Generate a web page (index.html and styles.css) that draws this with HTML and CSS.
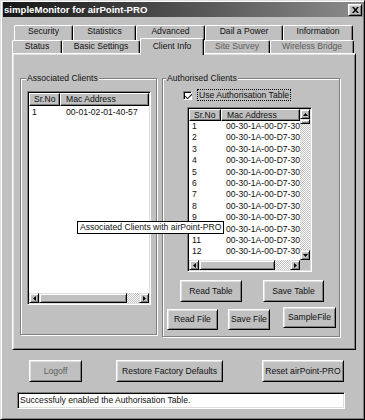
FILE: index.html
```html
<!DOCTYPE html>
<html>
<head>
<meta charset="utf-8">
<title>simpleMonitor for airPoint-PRO</title>
<link rel="stylesheet" href="styles.css">
</head>
<body>
<div class="window">
  <div class="titlebar">
    <span class="title">simpleMonitor for airPoint-PRO</span>
    <div class="close"><svg width="7" height="6" viewBox="0 0 7 6"><path d="M0 0h2l1.5 2L5 0h2L4.5 3 7 6H5L3.5 4 2 6H0l2.5-3z" fill="#000"/></svg></div>
  </div>

  <div class="tabs">
    <div class="tabrow back">
      <div class="tab t-sec">Security</div>
      <div class="tab t-stat">Statistics</div>
      <div class="tab t-adv">Advanced</div>
      <div class="tab t-dail">Dail a Power</div>
      <div class="tab t-info">Information</div>
    </div>
    <div class="tabrow front">
      <div class="tab t-status">Status</div>
      <div class="tab t-basic">Basic Settings</div>
      <div class="tab active t-client">Client Info</div>
      <div class="tab disabled t-site">Site Survey</div>
      <div class="tab disabled t-wb">Wireless Bridge</div>
    </div>
  </div>

  <div class="panel">
    <div class="group g1">
      <span class="glabel">Associated Clients</span>
      <div class="list l1">
        <div class="lv-header">
          <div class="hcell hc1">Sr.No</div>
          <div class="hcell hc2">Mac Address</div>
        </div>
        <div class="rows">
          <div class="row"><span class="c1">1</span><span class="c2">00-01-02-01-40-57</span></div>
        </div>
        <div class="hscroll">
          <div class="sbtn"><svg width="3" height="5" viewBox="0 0 3 5"><path d="M3 0v5L0 2.5z" fill="#000"/></svg></div>
          <div class="thumb th1"></div>
          <div class="track"></div>
          <div class="sbtn"><svg width="3" height="5" viewBox="0 0 3 5"><path d="M0 0v5l3-2.5z" fill="#000"/></svg></div>
        </div>
      </div>
    </div>

    <div class="group g2">
      <span class="glabel">Authorised Clients</span>
      <div class="checkrow">
        <div class="checkbox"><svg width="7" height="6" viewBox="0 0 7 6"><path d="M0 2.5l2.5 2.5L7 0.5V2L2.5 6.2 0 3.8z" fill="#000"/></svg></div>
        <span class="focus">Use Authorisation Table</span>
      </div>
      <div class="list l2">
        <div class="lv-main">
          <div class="lv-header">
            <div class="hcell hc1">Sr.No</div>
            <div class="hcell hc2">Mac Address</div>
          </div>
          <div class="rows">
            <div class="row"><span class="c1">1</span><span class="c2">00-30-1A-00-D7-30</span></div>
            <div class="row"><span class="c1">2</span><span class="c2">00-30-1A-00-D7-30</span></div>
            <div class="row"><span class="c1">3</span><span class="c2">00-30-1A-00-D7-30</span></div>
            <div class="row"><span class="c1">4</span><span class="c2">00-30-1A-00-D7-30</span></div>
            <div class="row"><span class="c1">5</span><span class="c2">00-30-1A-00-D7-30</span></div>
            <div class="row"><span class="c1">6</span><span class="c2">00-30-1A-00-D7-30</span></div>
            <div class="row"><span class="c1">7</span><span class="c2">00-30-1A-00-D7-30</span></div>
            <div class="row"><span class="c1">8</span><span class="c2">00-30-1A-00-D7-30</span></div>
            <div class="row"><span class="c1">9</span><span class="c2">00-30-1A-00-D7-30</span></div>
            <div class="row"><span class="c1">10</span><span class="c2">00-30-1A-00-D7-30</span></div>
            <div class="row"><span class="c1">11</span><span class="c2">00-30-1A-00-D7-30</span></div>
            <div class="row"><span class="c1">12</span><span class="c2">00-30-1A-00-D7-30</span></div>
          </div>
        </div>
        <div class="vscroll">
          <div class="sbtn"><svg width="5" height="3" viewBox="0 0 5 3"><path d="M0 3h5L2.5 0z" fill="#000"/></svg></div>
          <div class="thumb thv"></div>
          <div class="track"></div>
          <div class="sbtn"><svg width="5" height="3" viewBox="0 0 5 3"><path d="M0 0h5L2.5 3z" fill="#000"/></svg></div>
        </div>
        <div class="hscroll">
          <div class="sbtn"><svg width="3" height="5" viewBox="0 0 3 5"><path d="M3 0v5L0 2.5z" fill="#000"/></svg></div>
          <div class="thumb th2"></div>
          <div class="track"></div>
          <div class="sbtn"><svg width="3" height="5" viewBox="0 0 3 5"><path d="M0 0v5l3-2.5z" fill="#000"/></svg></div>
        </div>
        <div class="corner"></div>
      </div>
      <div class="brow1">
        <div class="btn b-readtable">Read Table</div>
        <div class="btn b-savetable">Save Table</div>
      </div>
      <div class="brow2">
        <div class="btn b-readfile">Read File</div>
        <div class="btn b-savefile">Save File</div>
        <div class="btn b-sample">SampleFile</div>
      </div>
    </div>
  </div>

  <div class="bottom">
    <div class="btn disabled b-logoff">Logoff</div>
    <div class="btn b-restore">Restore Factory Defaults</div>
    <div class="btn b-reset">Reset airPoint-PRO</div>
  </div>

  <div class="status">Successfuly enabled the Authorisation Table.</div>

  <div class="tooltip">Associated Clients with airPoint-PRO</div>
</div>
</body>
</html>
```

FILE: styles.css
```css
* { box-sizing: border-box; }
html, body { margin: 0; padding: 0; }
body {
  background: #c0c0c0;
  font-family: "Liberation Sans", Arial, sans-serif;
  font-size: 8.6px;
  line-height: 11px;
  color: #111;
}

.window {
  position: relative;
  width: 365px;
  height: 420px;
  background: #c0c0c0;
  border: 1px solid;
  border-color: #dfdfdf #000 #000 #dfdfdf;
  box-shadow: inset 1px 1px #fff, inset -1px -1px #808080;
  padding: 1px 1px 1px 2px;
}

/* title bar */
.titlebar {
  display: flex;
  align-items: center;
  justify-content: space-between;
  height: 15px;
  padding: 0 1px;
  background: linear-gradient(90deg, #161616, #8c8c8c);
}
.title {
  color: #fff;
  font-weight: bold;
  font-size: 9.6px;
  white-space: nowrap;
}
.close {
  width: 14px;
  height: 12px;
  background: #c0c0c0;
  border: 1px solid;
  border-color: #fff #000 #000 #fff;
  box-shadow: inset 1px 1px #dfdfdf, inset -1px -1px #808080;
  display: flex;
  align-items: center;
  justify-content: center;
}

/* tabs */
.tabs { margin-top: 8px; }
.tabrow { display: flex; height: 15px; }
.tabrow.back { margin-left: 11px; }
.tabrow.front { margin-left: 9px; margin-top: -2px; align-items: flex-end; }
.tab {
  flex: none;
  background: #c0c0c0;
  border: 1px solid #fff;
  border-right-color: #000;
  border-bottom: 0;
  border-radius: 2px 2px 0 0;
  box-shadow: inset -1px 0 #808080;
  text-align: center;
  white-space: nowrap;
}
.back .tab { height: 15px; }
.front .tab { height: 13px; }
.front .tab.active {
  height: 17px;
  margin-bottom: -2px;
  padding-top: 2px;
  position: relative;
  z-index: 1;
}
.tab.disabled { color: #5c5c5c; }
.t-sec { width: 59px; }
.t-stat { width: 63px; }
.t-adv { width: 69px; }
.t-dail { width: 78px; }
.t-info { width: 70px; }
.t-status { width: 50px; }
.t-basic { width: 78px; }
.t-client { width: 64px; }
.t-site { width: 66px; }
.t-wb { width: 84px; }

/* panel */
.panel {
  margin-left: 9px;
  width: 344px;
  height: 297px;
  border: 1px solid;
  border-color: #fff #000 #000 #fff;
  box-shadow: inset 1px 1px #dfdfdf, inset -1px -1px #808080;
  padding: 24px 0 0 7px;
  display: flex;
  align-items: flex-start;
  gap: 5px;
}

/* group boxes */
.group {
  flex: none;
  border: 1px solid #808080;
  box-shadow: inset 1px 1px #fff, 1px 1px #fff;
}
.g1 { width: 137px; height: 257px; }
.g2 { width: 178px; height: 259px; }
.glabel {
  display: block;
  width: fit-content;
  height: 11px;
  margin-top: -6px;
  padding: 0 1px;
  background: #c0c0c0;
  white-space: nowrap;
}
.g1 .glabel { margin-left: 5px; }
.g2 .glabel { margin-left: 3px; }

/* list views */
.list {
  background: #fff;
  border: 1px solid;
  border-color: #808080 #fff #fff #808080;
  box-shadow: inset 1px 1px #000, inset -1px -1px #dfdfdf;
  padding: 1px;
}
.l1 {
  margin: 7px 0 0 6px;
  width: 124px;
  height: 214px;
  display: flex;
  flex-direction: column;
}
.l2 {
  margin: 6px 0 0 24px;
  width: 125px;
  height: 165px;
  display: grid;
  grid-template-columns: 1fr 10px;
  grid-template-rows: 1fr 10px;
}
.lv-main {
  display: flex;
  flex-direction: column;
  overflow: hidden;
  min-width: 0;
}
.lv-header { display: flex; flex: none; }
.hcell {
  height: 13px;
  line-height: 11px;
  background: #c0c0c0;
  border: 1px solid;
  border-color: #fff #000 #000 #fff;
  box-shadow: inset -1px -1px #808080;
  padding-left: 4px;
  white-space: nowrap;
  overflow: hidden;
}
.hc1 { flex: none; width: 31px; }
.hc2 { flex: 1; padding-left: 5px; }
.l2 .hcell { height: 12px; line-height: 10px; }
.l2 .hc1 { width: 32px; }

.rows { flex: 1; overflow: hidden; }
.l1 .rows { padding-top: 1px; }
.row {
  display: flex;
  height: 11.4px;
  line-height: 11.4px;
  white-space: nowrap;
}
.row .c1 { flex: none; width: 31px; padding-left: 3px; }
.l2 .row .c1 { width: 32px; }
.row .c2 { padding-left: 6px; }
.l2 .row .c2 { padding-left: 5px; }

/* scrollbars */
.hscroll { display: flex; height: 10px; flex: none; }
.vscroll { display: flex; flex-direction: column; width: 10px; }
.sbtn, .thumb {
  flex: none;
  background: #c0c0c0;
  border: 1px solid;
  border-color: #dfdfdf #000 #000 #dfdfdf;
  box-shadow: inset 1px 1px #fff, inset -1px -1px #808080;
}
.sbtn {
  width: 10px;
  height: 10px;
  display: flex;
  align-items: center;
  justify-content: center;
}
.th1 { width: 88px; }
.th2 { width: 76px; }
.thv { height: 5px; }
.track {
  flex: 1;
  background: repeating-conic-gradient(#fff 0 25%, #c0c0c0 0 50%) 0 0 / 2px 2px;
}
.corner { background: #c0c0c0; }

/* checkbox */
.checkrow {
  display: flex;
  align-items: center;
  gap: 5px;
  height: 12px;
  margin: 5px 0 0 20px;
}
.checkbox {
  width: 9px;
  height: 9px;
  background: #fff;
  border: 1px solid;
  border-color: #808080 #fff #fff #808080;
  box-shadow: inset 1px 1px #000;
  display: flex;
  align-items: center;
  justify-content: center;
  overflow: visible;
}
.checkbox svg { flex: none; margin: 1px 0 0 1px; }
.focus {
  border: 1px dotted #000;
  padding: 0 1px;
  line-height: 10px;
  white-space: nowrap;
}

/* buttons */
.btn {
  display: flex;
  align-items: center;
  justify-content: center;
  height: 22px;
  background: #c0c0c0;
  border: 1px solid;
  border-color: #fff #000 #000 #fff;
  box-shadow: inset 1px 1px #dfdfdf, inset -1px -1px #808080;
  white-space: nowrap;
}
.btn.disabled { color: #5c5c5c; }
.brow1 { display: flex; gap: 21px; margin: 8px 0 0 17px; }
.b-readtable { width: 62px; }
.b-savetable { width: 61px; }
.brow2 { display: flex; align-items: flex-start; margin: 5px 0 0 4px; }
.brow2 .btn { height: 21px; margin-top: 2px; }
.b-readfile { width: 51px; }
.brow2 .b-savefile { width: 42px; margin-left: 10px; }
.brow2 .b-sample { width: 53px; margin-left: 13px; margin-top: 0; }

.bottom { display: flex; margin: 10px 0 0 26px; }
.b-logoff { width: 53px; }
.b-restore { width: 107px; margin-left: 34px; }
.b-reset { width: 82px; margin-left: 39px; }

/* status line */
.status {
  margin: 10px 0 0 14px;
  width: 328px;
  height: 17px;
  background: #fff;
  border: 1px solid;
  border-color: #808080 #fff #fff #808080;
  box-shadow: inset 1px 1px #000, inset -1px -1px #dfdfdf;
  padding-left: 2px;
  line-height: 14px;
  white-space: nowrap;
}

/* tooltip overlay */
.tooltip {
  position: absolute;
  left: 76px;
  top: 220px;
  height: 13px;
  padding: 0 2px;
  border: 1px solid #000;
  background: #fff;
  line-height: 11px;
  white-space: nowrap;
}
```
